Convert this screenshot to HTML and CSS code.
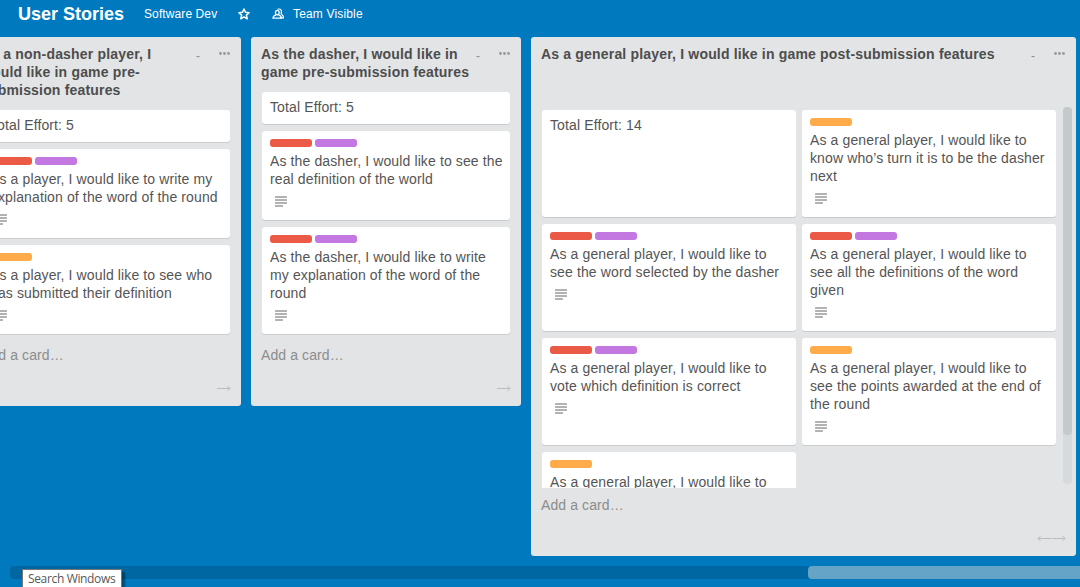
FILE: index.html
```html
<!DOCTYPE html>
<html lang="en">
<head>
<meta charset="utf-8">
<title>User Stories</title>
<link rel="stylesheet" href="styles.css">
</head>
<body>
<svg width="0" height="0" class="sprite">
  <symbol id="desc" viewBox="0 0 12 11"><path d="M.6 1h10.800M.6 4h10.800M.6 7h10.800M.6 10h6.800" stroke="#999" stroke-width="1.500" stroke-linecap="round" fill="none"/></symbol>
  <symbol id="dots" viewBox="0 0 11 3"><g fill="#999"><circle cx="1.500" cy="1.500" r="1.400"/><circle cx="5.500" cy="1.500" r="1.400"/><circle cx="9.500" cy="1.500" r="1.400"/></g></symbol>
  <symbol id="right" viewBox="0 0 14 7"><path d="M0 3.500h13M10.500 1l2.500 2.500L10.500 6" stroke="#b9bbbd" fill="none"/></symbol>
  <symbol id="left" viewBox="0 0 14 7"><path d="M14 3.500H1M3.500 1L1 3.500 3.500 6" stroke="#b9bbbd" fill="none"/></symbol>
</svg>
<header class="board-header">
  <h1 class="board-name"><span>User Stories</span></h1>
  <span class="org">Software Dev</span>
  <svg class="star" viewBox="0 0 12 12"><path d="M6 1l1.500 3.300 3.600.4-2.700 2.400.8 3.700L6 8.900l-3.200 1.900.8-3.700L.9 4.700l3.600-.4z" fill="none" stroke="#fff" stroke-width="1.500" stroke-linejoin="round"/></svg>
  <svg class="team" viewBox="0 0 12 12"><path d="M5.500 1.300c2.800-1 4.600.8 3.700 3.700-.3 1 0 1.400.8 1.800 1 .5 1.500 1.300 1.500 3H8" fill="none" stroke="#fff" stroke-width="1.200"/><ellipse cx="5.300" cy="4.600" rx="1.900" ry="2.300" fill="none" stroke="#fff" stroke-width="1.300"/><path d="M4 6.800C2 7.400 1 8 1 10.200h8.300C9.300 8 8.300 7.400 6.600 6.800" fill="none" stroke="#fff" stroke-width="1.300"/></svg>
  <span class="visibility">Team Visible</span>
</header>
<main class="board">
  <section class="list">
    <div class="list-header"><h2 class="list-title">As a non-dasher player, I<br>would like in game pre-<br>submission features</h2><span class="dash">-</span><svg class="dots"><use href="#dots"/></svg></div>
    <div class="cards">
      <article class="card plain">Total Effort: 5</article>
      <article class="card"><div class="labels"><i class="label red"></i><i class="label purple"></i></div><p>As a player, I would like to write my<br>explanation of the word of the round</p><svg class="desc"><use href="#desc"/></svg></article>
      <article class="card"><div class="labels"><i class="label orange"></i></div><p>As a player, I would like to see who<br>has submitted their definition</p><svg class="desc"><use href="#desc"/></svg></article>
    </div>
    <div class="add">Add a card…</div>
    <div class="moves"><svg class="arrow"><use href="#right"/></svg></div>
  </section>
  <section class="list">
    <div class="list-header"><h2 class="list-title">As the dasher, I would like in<br>game pre-submission features</h2><span class="dash">-</span><svg class="dots"><use href="#dots"/></svg></div>
    <div class="cards">
      <article class="card plain">Total Effort: 5</article>
      <article class="card"><div class="labels"><i class="label red"></i><i class="label purple"></i></div><p>As the dasher, I would like to see the<br>real definition of the world</p><svg class="desc"><use href="#desc"/></svg></article>
      <article class="card"><div class="labels"><i class="label red"></i><i class="label purple"></i></div><p>As the dasher, I would like to write<br>my explanation of the word of the<br>round</p><svg class="desc"><use href="#desc"/></svg></article>
    </div>
    <div class="add">Add a card…</div>
    <div class="moves"><svg class="arrow"><use href="#right"/></svg></div>
  </section>
  <section class="list wide">
    <div class="list-header"><h2 class="list-title">As a general player, I would like in game post-submission features</h2><span class="dash">-</span><svg class="dots"><use href="#dots"/></svg></div>
    <div class="scroll-area">
      <div class="card-grid">
        <article class="card plain">Total Effort: 14</article>
        <article class="card"><div class="labels"><i class="label orange"></i></div><p>As a general player, I would like to<br>know who’s turn it is to be the dasher<br>next</p><svg class="desc"><use href="#desc"/></svg></article>
        <article class="card"><div class="labels"><i class="label red"></i><i class="label purple"></i></div><p>As a general player, I would like to<br>see the word selected by the dasher</p><svg class="desc"><use href="#desc"/></svg></article>
        <article class="card"><div class="labels"><i class="label red"></i><i class="label purple"></i></div><p>As a general player, I would like to<br>see all the definitions of the word<br>given</p><svg class="desc"><use href="#desc"/></svg></article>
        <article class="card"><div class="labels"><i class="label red"></i><i class="label purple"></i></div><p>As a general player, I would like to<br>vote which definition is correct</p><svg class="desc"><use href="#desc"/></svg></article>
        <article class="card"><div class="labels"><i class="label orange"></i></div><p>As a general player, I would like to<br>see the points awarded at the end of<br>the round</p><svg class="desc"><use href="#desc"/></svg></article>
        <article class="card"><div class="labels"><i class="label orange"></i></div><p>As a general player, I would like to</p></article>
      </div>
      <div class="v-track"><div class="v-thumb"></div></div>
    </div>
    <div class="add">Add a card…</div>
    <div class="moves"><svg class="arrow"><use href="#left"/></svg><svg class="arrow"><use href="#right"/></svg></div>
  </section>
</main>
<div class="h-track"><div class="h-thumb"></div></div>
<div class="tooltip">Search Windows</div>
</body>
</html>
```

FILE: styles.css
```css
* { box-sizing: border-box; }
body {
  margin: 0;
  width: 1080px;
  height: 587px;
  overflow: hidden;
  background: #0079bf;
  color: #4d4d4d;
  font: 14px/18px "Liberation Sans", Arial, sans-serif;
  display: flex;
  flex-direction: column;
}
svg { display: block; flex: none; }
.sprite { position: absolute; }
.board-header {
  height: 37px;
  flex: none;
  display: flex;
  align-items: flex-start;
  padding: 5px 0 0 18px;
  color: #fff;
  font-size: 12px;
  letter-spacing: 0.1px;
  white-space: nowrap;
}
.board-name { margin: 0; width: 126px; font-size: 18px; line-height: 18px; letter-spacing: 0; }
.org { width: 94px; }
.star { width: 12px; height: 12px; margin-top: 3px; }
.team { width: 12px; height: 12px; margin: 3px 9px 0 22px; }
.visibility { letter-spacing: 0.16px; }
.board {
  display: flex;
  align-items: flex-start;
  gap: 10px;
  height: 529px;
  flex: none;
  margin-left: -29px;
}
.list {
  flex: none;
  width: 270px;
  background: #e2e4e6;
  border-radius: 3px;
  padding: 8px 0 11px;
}
.wide { width: 545px; }
.list-header { display: flex; align-items: flex-start; padding: 0 11px 11px 10px; white-space: nowrap; }
.wide .list-header { padding-bottom: 0; }
.list-title { margin: 0; flex: 1; font-size: 14px; line-height: 18px; letter-spacing: 0.18px; }
.dash { width: 5px; margin-right: 18px; color: #8c8c8c; font-size: 12px; line-height: 14px; padding-top: 4px; }
.dots { width: 11px; height: 3px; margin-top: 7px; }
.cards { display: flex; flex-direction: column; gap: 7px; padding: 0 11px; }
.card {
  background: #fff;
  border-radius: 3px;
  box-shadow: 0 1px 0 #c9cbcc;
  padding: 8px 0 12px 8px;
  white-space: nowrap;
  color: #555;
  letter-spacing: 0.12px;
}
.card.plain { padding: 6px 8px 8px; }
.card p { margin: 5px 0 8px; }
.labels { display: flex; gap: 3px; height: 8px; }
.label { width: 42px; height: 8px; border-radius: 3px; }
.red { background: #eb5a46; }
.purple { background: #c377e0; }
.orange { background: #ffab4a; }
.desc { width: 12px; height: 11px; margin: 0 0 1px 5px; }
.add { color: #8c8c8c; padding: 12px 10px 0; height: 51px; letter-spacing: 0.1px; }
.wide .add { padding-top: 8px; height: 47px; }
.moves { display: flex; justify-content: flex-end; gap: 1px; padding-right: 10px; height: 10px; }
.arrow { width: 14px; height: 7px; }
.scroll-area {
  display: flex;
  align-items: flex-start;
  justify-content: space-between;
  height: 392px;
  margin-top: 33px;
  padding: 0 4px 0 11px;
  overflow: hidden;
}
.card-grid {
  display: grid;
  grid-template-columns: 254px 254px;
  grid-auto-rows: 107px;
  gap: 7px 6px;
  padding-top: 14px;
}
.v-track { width: 9px; height: 377px; margin-top: 11px; flex: none; background: #d6dadc; border-radius: 4px; }
.v-thumb { height: 328px; background: #c4c9cc; border-radius: 4px; }
.h-track { flex: none; height: 13px; margin-left: 10px; padding-left: 798px; background: #0067a2; border-radius: 4px 0 0 4px; }
.h-thumb { height: 13px; background: #66a4c7; border-radius: 4px 0 0 4px; }
.tooltip {
  position: absolute;
  left: 22px;
  top: 569px;
  width: 100px;
  height: 20px;
  background: #fff;
  border: 1px solid #767676;
  box-shadow: 3px 3px 2px rgba(0, 0, 0, .4);
  color: #575757;
  font: 12px/18px "Open Sans", "Noto Sans", sans-serif;
  letter-spacing: -0.35px;
  padding-left: 5px;
  white-space: nowrap;
}
```
